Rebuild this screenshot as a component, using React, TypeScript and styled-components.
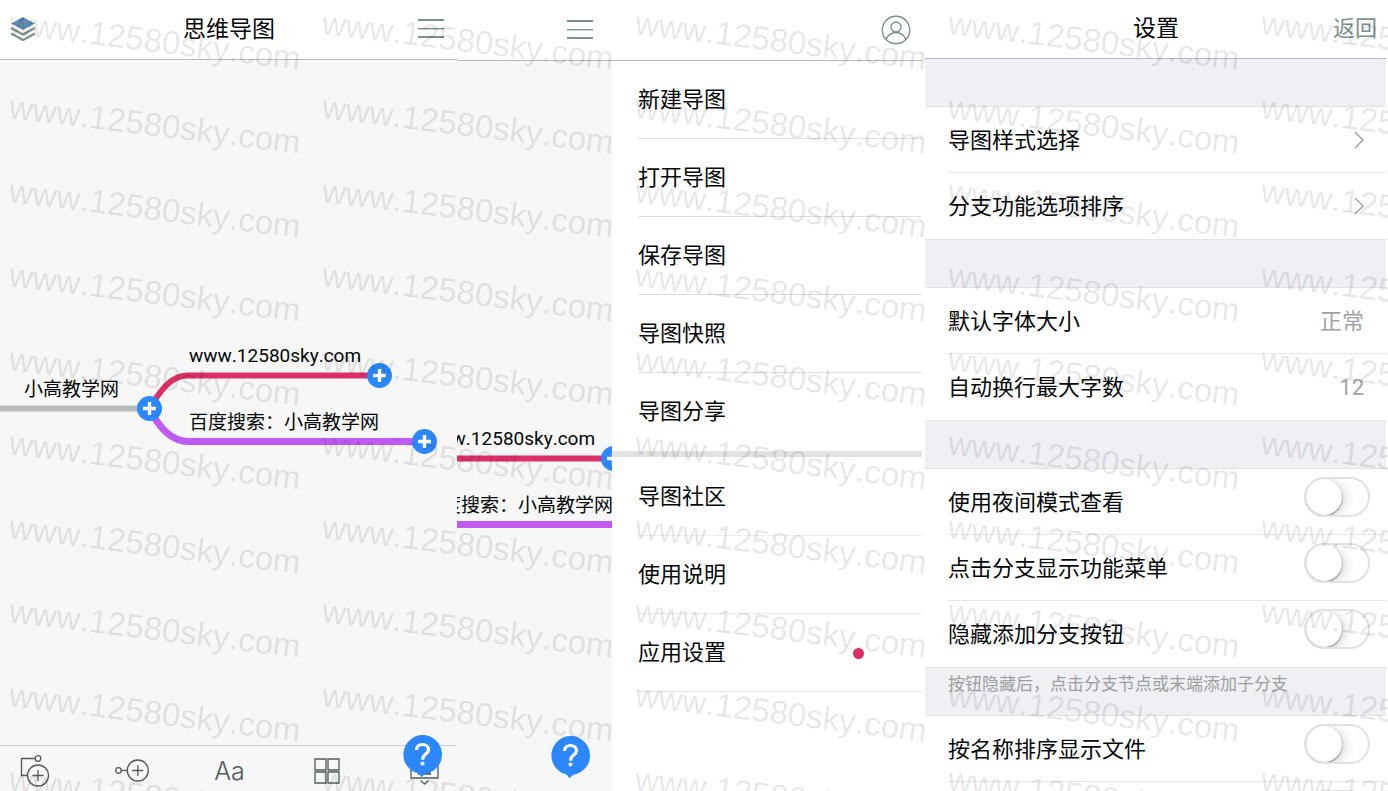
import React from 'react';
import styled, { createGlobalStyle } from 'styled-components';

const GlobalStyle = createGlobalStyle`
  *, *::before, *::after { box-sizing: border-box; }
  body {
    margin: 0;
    background: #fff;
    color: #050808;
    font-family: Roboto, "Noto Sans CJK SC", sans-serif;
    font-size: 22px;
    line-height: 32px;
  }
  button {
    margin: 0;
    padding: 0;
    border: 0;
    background: none;
    color: inherit;
    font: inherit;
    text-align: left;
    cursor: pointer;
  }
  h1, h2, p, ul { margin: 0; padding: 0; font: inherit; }
  ul { list-style: none; }
  svg { display: block; }
`;

const accent = '#7a918d';
const blue = '#2b87fb';

const Page = styled.main`
  position: relative;
  display: flex;
  height: 100vh;
  overflow: hidden;
`;

const Screen = styled.section<{ $grow: number; $gap?: number }>`
  position: relative;
  flex: ${(p) => p.$grow} 1 0;
  min-width: 0;
  margin-right: ${(p) => p.$gap ?? 0}px;
  display: flex;
  flex-direction: column;
  overflow: hidden;
`;

const Header = styled.header<{ $height: number }>`
  flex: none;
  display: grid;
  grid-template-columns: 1fr auto 1fr;
  align-items: center;
  height: ${(p) => p.$height}px;
  padding: 0 9px 0 10px;
  border-bottom: 1px solid #b4b8b8;
  background: #fff;
`;

const Title = styled.h1`
  grid-column: 2;
  font-size: 23px;
  line-height: 34px;
`;

const HeaderButton = styled.button<{ $end?: boolean }>`
  justify-self: ${(p) => (p.$end ? 'end' : 'start')};
  grid-column: ${(p) => (p.$end ? 3 : 1)};
  color: ${accent};
`;

const MenuToggle = styled(HeaderButton)`
  margin-right: 3px;
`;

const Canvas = styled.div`
  position: relative;
  flex: 1;
  min-width: 0;
  overflow: hidden;
  background: #f7f7f7;
`;

const Map = styled.div<{ $x: number; $y: number }>`
  position: absolute;
  left: ${(p) => p.$x}px;
  top: ${(p) => p.$y}px;
  width: 440px;
`;

const Branch = styled.span<{ $x: number; $y: number }>`
  position: absolute;
  left: ${(p) => p.$x}px;
  top: ${(p) => p.$y}px;
  font-size: 19px;
  line-height: 28px;
  font-kerning: none;
  white-space: nowrap;
`;

const AddNode = styled.button<{ $x: number; $y: number }>`
  position: absolute;
  left: ${(p) => p.$x}px;
  top: ${(p) => p.$y}px;
  width: 25px;
  height: 25px;
  border-radius: 50%;
  background: ${blue};
`;

const Toolbar = styled.nav`
  flex: none;
  display: flex;
  justify-content: space-between;
  align-items: center;
  height: 46px;
  padding: 4px 12px 0 14px;
  border-top: 1px solid #cfd1d1;
  background: #f7f7f7;
`;

const Tool = styled.button`
  display: flex;
  justify-content: center;
  width: 40px;
  color: #515c5a;
  font: 300 25px/32px Inter, sans-serif;
`;

const Help = styled.button<{ $right: number; $bottom: number }>`
  position: absolute;
  right: ${(p) => p.$right}px;
  bottom: ${(p) => p.$bottom}px;
`;

const Split = styled.div`
  flex: 1;
  display: flex;
  min-height: 0;
`;

const SplitCanvas = styled(Canvas)`
  flex: 1 1 0;
`;

const Drawer = styled.nav`
  flex: 2 1 0;
  min-width: 0;
`;

const DrawerGroup = styled.ul<{ $second?: boolean }>`
  margin-left: 26px;
  li {
    height: 78px;
    border-bottom: 1px solid ${(p) => (p.$second ? '#ededed' : '#dddede')};
  }
  li:last-child {
    border-color: ${(p) => (p.$second ? '#dfe0e0' : 'transparent')};
  }
`;

const DrawerDivider = styled.div`
  height: 6px;
  margin-bottom: 1px;
  background: #e2e2e2;
`;

const DrawerItem = styled.button`
  display: flex;
  justify-content: space-between;
  align-items: center;
  width: 100%;
  height: 100%;
  padding: 1px 58px 0 0;
`;

const Dot = styled.span`
  width: 11px;
  height: 11px;
  border-radius: 50%;
  background: #d92f65;
`;

const Spacer = styled.div`
  flex: none;
  height: 48px;
  padding: 4px 23px 0;
  border-bottom: 1px solid #e2e2e4;
  background: #efeff4;
  color: #9b9e9f;
  font-size: 17px;
  line-height: 24px;
`;

const Group = styled.ul`
  flex: none;
  border-bottom: 1px solid #e4e4e6;
`;

const Row = styled.li`
  height: 66px;
  padding-left: 23px;
`;

const rowBody = `
  display: flex;
  justify-content: space-between;
  align-items: center;
  width: 100%;
  height: 66px;
  border-bottom: 1px solid #e6e6e7;
`;

const RowButton = styled.button`
  ${rowBody}
  padding: 2px 22px 0 0;
  ${Row}:last-child & { border-color: transparent; }
`;

const RowLabel = styled.label`
  ${rowBody}
  padding: 2px 16px 0 0;
  cursor: pointer;
  ${Row}:last-child & { border-color: transparent; }
`;

const Value = styled.span`
  color: #a0a3a3;
`;

const Switch = styled.input`
  appearance: none;
  align-self: flex-start;
  width: 66px;
  height: 40px;
  margin: 6px 0 0 auto;
  border: 2px solid #e0e1e1;
  border-radius: 20px;
  background: #fff;
  overflow: hidden;
  cursor: pointer;
  &::before {
    content: '';
    display: block;
    width: 36px;
    height: 36px;
    border-radius: 50%;
    background: #fff;
    box-shadow: 0 1px 2px #6d7272, 3px 2px 12px rgba(0, 0, 0, 0.16);
  }
  &:checked { background: ${blue}; }
  &:checked::before { margin-left: 26px; }
`;

const Watermarks = styled.div`
  position: absolute;
  inset: 0;
  display: grid;
  grid-template-columns: repeat(5, 313px);
  grid-auto-rows: 84px;
  padding-left: 8px;
  overflow: hidden;
  pointer-events: none;
  color: rgba(0, 0, 0, 0.1);
  font: 33px/40px "Liberation Sans", Arial, sans-serif;
  font-kerning: none;
  span {
    margin-top: 3px;
    height: 40px;
    transform: rotate(7deg);
    transform-origin: 0 30px;
    white-space: nowrap;
  }
`;

function LayersIcon() {
  return (
    <svg width="26" height="26" viewBox="0 0 26 26" fill="none">
      <path d="M13 0 25 6.500 13 13 1 6.500Z" fill={accent} />
      <path d="M13 2 21 6.500 13 11 5 6.500Z" stroke={blue} strokeWidth="2" strokeDasharray="1.500 1.500" />
      <path d="M8 6.500h10M10 8.500h7M11 4.500h4" stroke={blue} strokeWidth="1" strokeDasharray="1 2" />
      <path d="m1 11 12 6.500L25 11M1 16.500l12 6.500 12-6.500" stroke={accent} strokeWidth="2.200" />
    </svg>
  );
}

function BurgerIcon() {
  return (
    <svg width="27" height="21" viewBox="0 0 27 21" fill={accent}>
      <rect width="26" height="2" y="0" />
      <rect width="26" height="1.400" y="9" />
      <rect width="26" height="2" y="17" />
    </svg>
  );
}

function ProfileIcon() {
  return (
    <svg width="30" height="30" viewBox="0 0 30 30" fill="none" stroke={accent} strokeWidth="1.400">
      <circle cx="15" cy="15" r="13.700" />
      <circle cx="15" cy="12" r="5" />
      <path d="M5 24.500C7 20 10.500 17.500 15 17.500S23 20 25 24.500" />
    </svg>
  );
}

function HelpIcon() {
  return (
    <svg width="39" height="43" viewBox="0 0 39 43" fill="none">
      <path d="M19.500 0a19.500 19.500 0 0 1 3 38.770L18.500 42l-3-3.500A19.500 19.500 0 0 1 19.500 0Z" fill={blue} />
      <path d="M13.500 15c0-3.500 2.500-5.500 6-5.500s6 2 6 5.200c0 4.300-5.700 4.500-5.700 9v1" stroke="#fff" strokeWidth="3.200" />
      <circle cx="19.500" cy="28.500" r="2" fill="#fff" />
    </svg>
  );
}

function PlusIcon() {
  return (
    <svg width="25" height="25" viewBox="0 0 25 25">
      <path d="M12.500 6v13M6 12.500h13" stroke="#fff" strokeWidth="3.400" />
    </svg>
  );
}

function ChevronIcon() {
  return (
    <svg width="10" height="18" viewBox="0 0 10 18" fill="none" stroke="#9a9d9d" strokeWidth="1.300">
      <path d="m1 0 8 8-8 8" />
    </svg>
  );
}

function ChildBranchIcon() {
  return (
    <svg width="32" height="32" viewBox="0 0 32 32" fill="none" stroke="currentColor" strokeWidth="1.300">
      <circle cx="20" cy="3.500" r="2.800" />
      <path d="M17 3.500H3.500v17H9" />
      <circle cx="20" cy="20.500" r="10.500" />
      <path d="M20 15v11M14.500 20.500h11" />
    </svg>
  );
}

function SiblingBranchIcon() {
  return (
    <svg width="34" height="24" viewBox="0 0 34 24" fill="none" stroke="currentColor" strokeWidth="1.300">
      <circle cx="3.500" cy="11.500" r="2.800" />
      <path d="M6.300 11.500h6" />
      <circle cx="22.800" cy="11.500" r="10.500" />
      <path d="M22.800 6v11M17.300 11.500h11" />
    </svg>
  );
}

function GridIcon() {
  return (
    <svg width="26" height="26" viewBox="0 0 26 26" fill="none" stroke="currentColor" strokeWidth="1.300">
      <path d="M1 1h11v11H1ZM14 1h11v11H14ZM1 14h11v11H1ZM14 14h11v11H14Z" />
    </svg>
  );
}

function KeyboardIcon() {
  return (
    <svg width="30" height="28" viewBox="0 0 30 28" fill="none" stroke="currentColor" strokeWidth="1.300">
      <path d="M1 3h27v18H1ZM10.500 23.500l4 3.500 4-3.500" />
      <path d="M8 16.500h13" strokeWidth="2.500" />
      <path d="M6 8h18M6 12h18" strokeDasharray="2 2" />
    </svg>
  );
}

function MindMap({ x, y }: { x: number; y: number }) {
  return (
    <Map $x={x} $y={y}>
      <svg width="440" height="120" viewBox="0 0 440 120" fill="none">
        <path d="M0 68.500H149" stroke="#b6bbbb" strokeWidth="6" />
        <path d="M149 69C160 51 171 35.500 187 35.500H379" stroke="#dc2f66" strokeWidth="6" />
        <path d="M149 69C160 88 171 101.500 189 101.500H425" stroke="#bf5bf3" strokeWidth="7" />
      </svg>
      <Branch $x={24} $y={36}>小高教学网</Branch>
      <Branch $x={189} $y={2}>www.12580sky.com</Branch>
      <Branch $x={189} $y={69}>百度搜索：小高教学网</Branch>
      <AddNode $x={137} $y={56} aria-label="添加分支"><PlusIcon /></AddNode>
      <AddNode $x={367} $y={23} aria-label="添加分支"><PlusIcon /></AddNode>
      <AddNode $x={412} $y={89} aria-label="添加分支"><PlusIcon /></AddNode>
    </Map>
  );
}

function EditorScreen() {
  return (
    <Screen $grow={457}>
      <Header $height={60}>
        <HeaderButton aria-label="图层"><LayersIcon /></HeaderButton>
        <Title>思维导图</Title>
        <MenuToggle $end aria-label="菜单"><BurgerIcon /></MenuToggle>
      </Header>
      <Canvas>
        <MindMap x={0} y={280} />
      </Canvas>
      <Toolbar>
        <Tool aria-label="添加子分支"><ChildBranchIcon /></Tool>
        <Tool aria-label="添加同级分支"><SiblingBranchIcon /></Tool>
        <Tool>Aa</Tool>
        <Tool aria-label="布局"><GridIcon /></Tool>
        <Tool aria-label="收起键盘"><KeyboardIcon /></Tool>
      </Toolbar>
      <Help $right={15} $bottom={13} aria-label="帮助"><HelpIcon /></Help>
    </Screen>
  );
}

const SplitHeader = styled(Header)`
  grid-template-columns: 1fr 2fr;
  padding: 0;
`;

const SplitHeaderCell = styled.div<{ $inset: number }>`
  display: flex;
  justify-content: flex-end;
  align-items: center;
  padding-right: ${(p) => p.$inset}px;
`;

function DrawerScreen() {
  return (
    <Screen $grow={465} $gap={3}>
      <SplitHeader $height={61}>
        <SplitHeaderCell $inset={18}>
          <HeaderButton aria-label="菜单"><BurgerIcon /></HeaderButton>
        </SplitHeaderCell>
        <SplitHeaderCell $inset={11}>
          <HeaderButton aria-label="个人中心"><ProfileIcon /></HeaderButton>
        </SplitHeaderCell>
      </SplitHeader>
      <Split>
        <SplitCanvas>
          <MindMap x={-223} y={362} />
          <Help $right={22} $bottom={12} aria-label="帮助"><HelpIcon /></Help>
        </SplitCanvas>
        <Drawer>
          <DrawerGroup>
            {['新建导图', '打开导图', '保存导图', '导图快照', '导图分享'].map((name) => (
              <li key={name}><DrawerItem>{name}</DrawerItem></li>
            ))}
          </DrawerGroup>
          <DrawerDivider />
          <DrawerGroup $second>
            <li><DrawerItem>导图社区</DrawerItem></li>
            <li><DrawerItem>使用说明</DrawerItem></li>
            <li><DrawerItem>应用设置<Dot /></DrawerItem></li>
          </DrawerGroup>
        </Drawer>
      </Split>
    </Screen>
  );
}

function LinkRow({ label, value }: { label: string; value?: string }) {
  return (
    <Row>
      <RowButton>
        {label}
        {value ? <Value>{value}</Value> : <ChevronIcon />}
      </RowButton>
    </Row>
  );
}

function SwitchRow({ label }: { label?: string }) {
  return (
    <Row>
      <RowLabel>
        {label}
        <Switch type="checkbox" aria-label={label ?? '开关'} />
      </RowLabel>
    </Row>
  );
}

function SettingsScreen() {
  return (
    <Screen $grow={461} $gap={2}>
      <Header $height={59}>
        <Title>设置</Title>
        <HeaderButton $end>返回</HeaderButton>
      </Header>
      <Spacer />
      <Group>
        <LinkRow label="导图样式选择" />
        <LinkRow label="分支功能选项排序" />
      </Group>
      <Spacer />
      <Group>
        <LinkRow label="默认字体大小" value="正常" />
        <LinkRow label="自动换行最大字数" value="12" />
      </Group>
      <Spacer />
      <Group>
        <SwitchRow label="使用夜间模式查看" />
        <SwitchRow label="点击分支显示功能菜单" />
        <SwitchRow label="隐藏添加分支按钮" />
      </Group>
      <Spacer><p>按钮隐藏后，点击分支节点或末端添加子分支</p></Spacer>
      <Group>
        <SwitchRow label="按名称排序显示文件" />
        <SwitchRow />
      </Group>
    </Screen>
  );
}

export default function App() {
  return (
    <>
      <GlobalStyle />
      <Page>
        <EditorScreen />
        <DrawerScreen />
        <SettingsScreen />
        <Watermarks aria-hidden="true">
          {Array.from({ length: 50 }, (_, i) => (
            <span key={i}>www.12580sky.com</span>
          ))}
        </Watermarks>
      </Page>
    </>
  );
}
